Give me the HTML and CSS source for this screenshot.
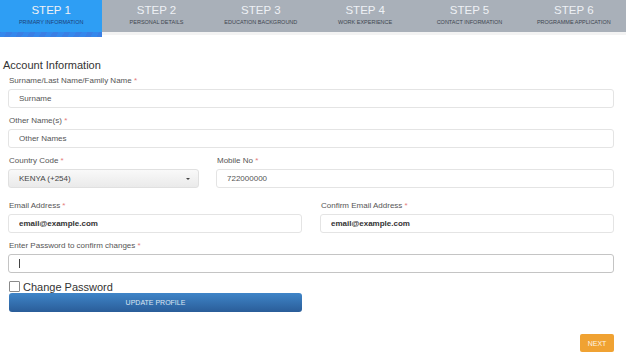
FILE: index.html
```html
<!DOCTYPE html>
<html>
<head>
    <meta charset="UTF-8">
    <meta name="viewport" content="width=device-width, initial-scale=1.0">
    <title>Account Information</title>
    <link rel="stylesheet" href="styles.css">
</head>
<body>
    <div class="steps">
        <div class="step active">
            <span class="step-title">STEP 1</span>
            <span class="step-sub">PRIMARY INFORMATION</span>
        </div>
        <div class="step">
            <span class="step-title">STEP 2</span>
            <span class="step-sub">PERSONAL DETAILS</span>
        </div>
        <div class="step">
            <span class="step-title">STEP 3</span>
            <span class="step-sub">EDUCATION BACKGROUND</span>
        </div>
        <div class="step">
            <span class="step-title">STEP 4</span>
            <span class="step-sub">WORK EXPERIENCE</span>
        </div>
        <div class="step">
            <span class="step-title">STEP 5</span>
            <span class="step-sub">CONTACT INFORMATION</span>
        </div>
        <div class="step">
            <span class="step-title">STEP 6</span>
            <span class="step-sub">PROGRAMME APPLICATION</span>
        </div>
    </div>

    <div class="container">
        <h3>Account Information</h3>

        <div class="field">
            <label>Surname/Last Name/Family Name <span class="req">*</span></label>
            <input type="text" value="Surname">
        </div>
        <div class="field">
            <label>Other Name(s) <span class="req">*</span></label>
            <input type="text" value="Other Names">
        </div>

        <div class="row row-4-8">
            <div class="field">
                <label>Country Code <span class="req">*</span></label>
                <div class="select">
                    <span>KENYA (+254)</span>
                    <span class="caret"></span>
                </div>
            </div>
            <div class="field">
                <label>Mobile No <span class="req">*</span></label>
                <input type="text" value="722000000">
            </div>
        </div>

        <div class="row row-6-6">
            <div class="field">
                <label>Email Address <span class="req">*</span></label>
                <input type="text" class="bold" value="email@example.com">
            </div>
            <div class="field">
                <label>Confirm Email Address <span class="req">*</span></label>
                <input type="text" class="bold" value="email@example.com">
            </div>
        </div>

        <div class="field">
            <label>Enter Password to confirm changes <span class="req">*</span></label>
            <div class="input focus"><span class="cursor"></span></div>
        </div>

        <div class="check">
            <span class="box"></span>
            <span>Change Password</span>
        </div>
        <div class="row row-6-6">
            <button class="btn-update">UPDATE PROFILE</button>
        </div>

        <div class="actions">
            <button class="btn-next">NEXT</button>
        </div>
    </div>
</body>
</html>
```

FILE: styles.css
```css
body {
    font-family: 'Liberation Sans', Arial, sans-serif;
    background: #ffffff;
    color: #555555;
    margin: 0;
}
.steps {
    display: grid;
    grid-template-columns: repeat(6, 1fr);
    background: #a9b0b9;
    height: 32px;
    border-bottom: 3px solid #f3f3f3;
}
.step {
    display: flex;
    flex-direction: column;
    align-items: center;
    padding-top: 4px;
}
.step.active {
    height: 37px;
    box-sizing: border-box;
    margin-right: 2px;
    background-color: #2e9ef4;
    background-image: repeating-linear-gradient(-60deg, #3a7fe4 0, #3a7fe4 5px, #3488ec 5px, #3488ec 10px);
    background-size: 100% 5px;
    background-position: 0 100%;
    background-repeat: no-repeat;
}
.step-title {
    color: #eef1f5;
    font-size: 11.5px;
    line-height: 13px;
}
.step-sub {
    color: #3f4650;
    font-size: 5.5px;
    line-height: 8px;
    margin-top: 1px;
}
.step.active .step-sub {
    color: #1d3f78;
}
.container {
    padding: 0 12px 0 8px;
}
h3 {
    font-weight: normal;
    font-size: 11px;
    color: #333333;
    margin: 24px 0 4px -5px;
    line-height: 13px;
}
.field {
    margin-bottom: 8px;
}
label {
    display: block;
    font-size: 8px;
    line-height: 10px;
    margin: 0 0 3px 1px;
    color: #555555;
}
.req {
    color: #e57b7b;
}
input, .input, .select {
    display: block;
    width: 100%;
    box-sizing: border-box;
    height: 19px;
    border: 1px solid #e4e4e4;
    border-radius: 3px;
    padding: 0 10px;
    font-family: inherit;
    font-size: 8px;
    color: #555555;
    background: #ffffff;
}
input.bold {
    font-weight: bold;
    color: #333333;
}
.input.focus {
    border-color: #c4c4c4;
    display: flex;
    align-items: center;
}
.cursor {
    width: 1px;
    height: 9px;
    background: #444444;
}
.select {
    display: flex;
    align-items: center;
    justify-content: space-between;
    background: linear-gradient(#f9f9f9, #eaeaea);
    border-color: #e0e0e0;
    color: #444444;
}
.caret {
    border-left: 2.5px solid transparent;
    border-right: 2.5px solid transparent;
    border-top: 2.5px solid #444444;
    margin-right: -2px;
}
.row {
    display: grid;
    column-gap: 17px;
}
.row-4-8 {
    grid-template-columns: 191px 1fr;
    margin-bottom: 5px;
}
.row-6-6 {
    grid-template-columns: 1fr 1fr;
    column-gap: 18px;
}
.check {
    display: flex;
    align-items: center;
    font-size: 11px;
    color: #333333;
    margin: -1px 0 0 1px;
    height: 13px;
}
.box {
    width: 9px;
    height: 9px;
    border: 1px solid #8a8a8a;
    border-radius: 1px;
    margin-right: 3px;
}
.btn-update {
    height: 19px;
    border: none;
    border-radius: 3px;
    background: linear-gradient(#3f85c8, #2a5d99);
    color: #dce6f2;
    font-family: inherit;
    font-size: 7px;
    margin-left: 1px;
}
.actions {
    display: flex;
    justify-content: flex-end;
    margin-top: 22px;
}
.btn-next {
    width: 34px;
    height: 18px;
    border: none;
    border-radius: 2px;
    background: #f0a232;
    color: #fdf3e2;
    font-family: inherit;
    font-size: 7px;
}
```
